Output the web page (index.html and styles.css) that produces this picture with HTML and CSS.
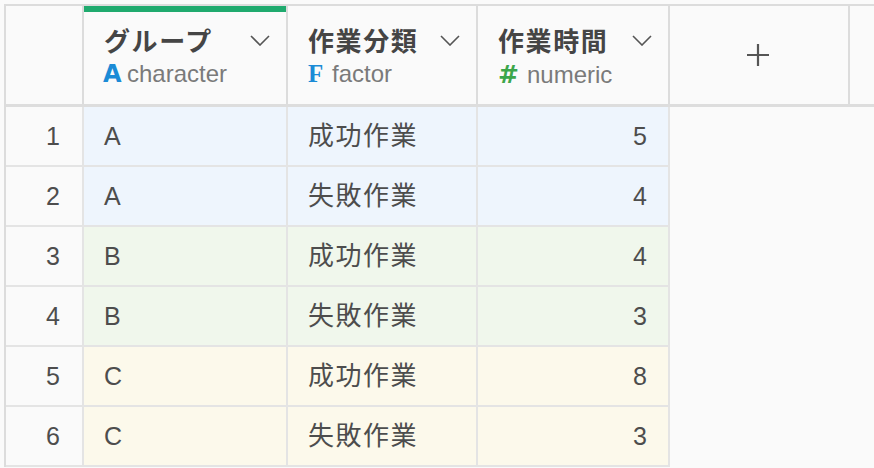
FILE: index.html
```html
<!DOCTYPE html>
<html lang="ja">
<head>
<meta charset="utf-8">
<link rel="stylesheet" href="styles.css">
</head>
<body>
<div class="grid">
  <div class="row head">
    <div class="cell idx"></div>
    <div class="cell col grp active">
      <div class="title"><span>グループ</span><svg class="chev" viewBox="0 0 20 11"><polyline points="1,1 10,10 19,1"/></svg></div>
      <div class="type"><span class="ic ic-a">A</span>character</div>
    </div>
    <div class="cell col cat">
      <div class="title"><span>作業分類</span><svg class="chev" viewBox="0 0 20 11"><polyline points="1,1 10,10 19,1"/></svg></div>
      <div class="type"><span class="ic ic-f">F</span>factor</div>
    </div>
    <div class="cell col num">
      <div class="title"><span>作業時間</span><svg class="chev" viewBox="0 0 20 11"><polyline points="1,1 10,10 19,1"/></svg></div>
      <div class="type"><span class="ic ic-n">#</span>numeric</div>
    </div>
    <div class="cell add"><svg viewBox="0 0 22 22"><path d="M11 0V22M0 11H22"/></svg></div>
    <div class="cell rest"></div>
  </div>

  <div class="row"><div class="cell idx">1</div><div class="cell d grp b">A</div><div class="cell d cat b"><span class="jp">成功作業</span></div><div class="cell d num b r">5</div></div>
  <div class="row"><div class="cell idx">2</div><div class="cell d grp b">A</div><div class="cell d cat b"><span class="jp">失敗作業</span></div><div class="cell d num b r">4</div></div>
  <div class="row"><div class="cell idx">3</div><div class="cell d grp g">B</div><div class="cell d cat g"><span class="jp">成功作業</span></div><div class="cell d num g r">4</div></div>
  <div class="row"><div class="cell idx">4</div><div class="cell d grp g">B</div><div class="cell d cat g"><span class="jp">失敗作業</span></div><div class="cell d num g r">3</div></div>
  <div class="row"><div class="cell idx">5</div><div class="cell d grp y">C</div><div class="cell d cat y"><span class="jp">成功作業</span></div><div class="cell d num y r">8</div></div>
  <div class="row"><div class="cell idx">6</div><div class="cell d grp y">C</div><div class="cell d cat y"><span class="jp">失敗作業</span></div><div class="cell d num y r">3</div></div>
</div>
</body>
</html>
```

FILE: styles.css
```css
html, body {
  margin: 0;
  padding: 0;
  background: #fafafa;
  font-family: "Liberation Sans", "Noto Sans CJK JP", sans-serif;
  color: #4a4a4a;
  overflow: hidden;
}

.grid {
  margin: 4px 0 0 4px;
  border-top: 2px solid #dcdcdc;
  border-left: 2px solid #dcdcdc;
  width: 870px;
}

.row {
  display: flex;
  height: 60px;
}

.row.head {
  height: 101px;
  border-bottom: 3px solid #dddddd;
  box-sizing: border-box;
}

.cell {
  box-sizing: border-box;
  flex: none;
  border-right: 2px solid #e4e4e4;
  border-bottom: 2px solid #e4e4e4;
}

.head .cell {
  border-bottom: none;
  border-right-color: #dcdcdc;
  height: 98px;
}

.idx { width: 78px; }
.grp { width: 204px; }
.cat { width: 190px; }
.num { width: 192px; }
.add { width: 180px; }
.rest { width: 24px; border-right: none; }

.row .idx {
  background: #fafafa;
  text-align: right;
  padding-right: 22px;
  font-size: 25px;
  line-height: 58px;
  color: #4d4d4d;
}

.col {
  padding: 13px 16px 0 20px;
  display: flex;
  flex-direction: column;
}

.active {
  box-shadow: inset 0 6px 0 #1faa6e;
}

.title {
  display: flex;
  align-items: center;
  justify-content: space-between;
  height: 40px;
  font-size: 26px;
  font-weight: bold;
  color: #454545;
  letter-spacing: 1.6px;
}

.chev {
  width: 20px;
  height: 11px;
  fill: none;
  stroke: #555;
  stroke-width: 1.6;
  margin-top: 2px;
}

.type {
  display: flex;
  align-items: baseline;
  font-size: 24px;
  color: #7a7a7a;
  margin-top: 1px;
}

.ic {
  display: inline-block;
  font-weight: bold;
}

.ic-a {
  color: #1b8bd6;
  font-family: "DejaVu Sans", sans-serif;
  font-size: 24px;
  width: 24px;
  margin-left: -1px;
}

.ic-f {
  color: #1b8bd6;
  font-family: "Liberation Serif", serif;
  font-size: 25px;
  width: 24px;
}

.ic-n {
  color: #3ca64a;
  font-family: "DejaVu Sans", sans-serif;
  font-size: 25px;
  width: 29px;
}

.add {
  display: flex;
  align-items: center;
  justify-content: center;
}

.add svg {
  width: 22px;
  height: 22px;
  stroke: #555;
  stroke-width: 2.2;
  margin-left: -2px;
}

.d {
  padding: 0 20px;
  font-size: 25px;
  line-height: 58px;
  color: #4d4d4d;
}

.d .jp {
  font-size: 26px;
  letter-spacing: 1.5px;
}

.d.r { text-align: right; padding-right: 21px; }

.b { background: #eef5fd; }
.g { background: #f0f7ec; }
.y { background: #fcf9eb; }
```
